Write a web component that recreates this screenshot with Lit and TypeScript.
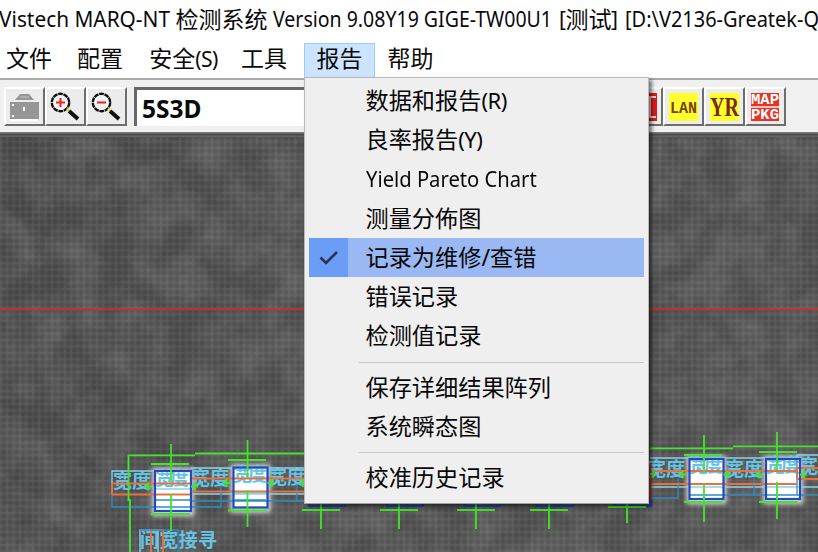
import { LitElement, html, svg, css } from "lit";
import { customElement, property } from "lit/decorators.js";

const FONT = css`"Noto Sans", "Noto Sans CJK SC", sans-serif`;

type Entry = { label?: string; latin?: boolean; checked?: boolean };
const ENTRIES: Entry[] = [
  { label: "数据和报告(R)" },
  { label: "良率报告(Y)" },
  { label: "Yield Pareto Chart", latin: true },
  { label: "测量分佈图" },
  { label: "记录为维修/查错", checked: true },
  { label: "错误记录" },
  { label: "检测值记录" },
  {},
  { label: "保存详细结果阵列" },
  { label: "系统瞬态图" },
  {},
  { label: "校准历史记录" },
];

@customElement("report-menu")
export class ReportMenu extends LitElement {
  static styles = css`
    :host { display: block; box-sizing: border-box; width: 345px; height: 427px; padding: 3px 4px;
      background: #efefef; border: 1px solid #b9b9b9; border-bottom-color: #a0a0a0;
      box-shadow: 3px 3px 4px rgba(0,0,0,.55); font: 23.2px/39px ${FONT}; color: #080808; }
    .item { display: flex; height: 39.3px; align-items: center; }
    .gutter { width: 39px; height: 100%; margin-right: 17.5px; display: grid; place-items: center; flex: none; }
    .label { white-space: pre; line-height: 36px; height: 38px; }
    .latin { font-size: 21.4px; transform: scaleX(.944); transform-origin: 0 50%; line-height: 38px; }
    .on { background: #99b8f4; }
    .on .gutter { background: #6b9df7; }
    .sep { height: 12px; margin-left: 50px; display: flex; align-items: center; }
    .sep::after { content: ""; height: 1px; width: 100%; background: #c8c8c8; }
    .p { font-size: 22px; letter-spacing: -.5px; }
  `;
  render() {
    return ENTRIES.map((e) => {
      if (!e.label) return html`<div class="sep"></div>`;
      const parts = e.label.split(/(\([A-Z]\))/);
      return html`<div class="item ${e.checked ? "on" : ""}">
        <span class="gutter">${e.checked
          ? html`<svg width="20" height="16" viewBox="0 0 20 16"><path d="M1.5 7.5 7 13 18 2" fill="none" stroke="#26364f" stroke-width="2.6"/></svg>`
          : ""}</span>
        <span class="label ${e.latin ? "latin" : ""}">${parts[0]}${parts[1] ? html`<span class="p">${parts[1]}</span>` : ""}</span>
      </div>`;
    });
  }
}

@customElement("tool-button")
export class ToolButton extends LitElement {
  @property() icon = "";
  static styles = css`
    :host { display: block; box-sizing: border-box; width: 41px; height: 39px; background: #ececec;
      border: 2px solid #fff; border-right: 2px solid #6e6e6e; border-bottom: 2px solid #6e6e6e; }
    svg { display: block; }
    .lan { font: bold 17px "Liberation Mono", monospace; }
    .yr { font: bold 27px "Liberation Serif", serif; }
    .pkg { font: bold 14px "Liberation Mono", monospace; }
  `;
  private glyph() {
    switch (this.icon) {
      case "case":
        return svg`<path d="M9 11 14 5H23L28 11" fill="#969696"/><path d="M14 8H23" stroke="#c4c4c4"/>
          <path d="M4 13H33V30H4Z" fill="#969696"/><path d="M12 12H28" stroke="#eee"/>
          <path d="M17 18h2v4h-2ZM6 15h2v2h-2ZM6 26h2v2h-2Z" fill="#fff"/><path d="M3 31H32" stroke="#fff" stroke-width="2"/>`;
      case "in":
      case "out":
        return svg`<circle cx="13.5" cy="13.5" r="8.7" fill="#f4f4f4" stroke="#111" stroke-width="2.4" stroke-dasharray="4.8 .67"/>
          <path d="M9 13.5H18" stroke="#ee2020" stroke-width="2"/>
          ${this.icon === "in" ? svg`<path d="M13.5 9V18" stroke="#ee2020" stroke-width="2"/>` : ""}
          <path d="M20 21.5 22 20" stroke="#e6dd22" stroke-width="3"/><path d="M22 22 31 30" stroke="#111" stroke-width="4"/>`;
      case "red":
        return svg`<rect x="4" y="4" width="29" height="28" fill="#dd1c1c"/><path d="M32 8H26V28H32" stroke="#f3dada" stroke-width="2" fill="none"/>`;
      case "lan":
        return svg`<rect x="4" y="4" width="29" height="28" fill="#ffff2c"/><text class="lan" x="5" y="24" fill="#7a3f08" textLength="27" lengthAdjust="spacingAndGlyphs">LAN</text>`;
      case "yr":
        return svg`<rect x="4" y="4" width="29" height="28" fill="#ffff2c"/><text class="yr" x="4" y="27" fill="#7a2808" textLength="29" lengthAdjust="spacingAndGlyphs">YR</text>`;
      default:
        return svg`<rect x="4" y="4" width="28" height="28" fill="#e63427"/><path d="M4 18H32" stroke="#fff" stroke-width="1.4"/>
          <text class="pkg" x="4" y="15" fill="#fff" textLength="28" lengthAdjust="spacingAndGlyphs">MAP</text>
          <text class="pkg" x="4" y="30" fill="#fff" textLength="28" lengthAdjust="spacingAndGlyphs">PKG</text>`;
    }
  }
  render() {
    return html`<svg width="37" height="35" viewBox="0 0 37 35">${this.glyph()}</svg>`;
  }
}

type Pad = { x: number; w: number; y: number; cx: number; top: number; hx: number };
const PADS: Pad[] = [
  { x: 155, w: 36, y: 471, cx: 171, top: 444, hx: 151 },
  { x: 233.5, w: 34, y: 467.5, cx: 247.5, top: 440, hx: 228 },
  { x: 689.5, w: 34, y: 459, cx: 704, top: 435, hx: 684 },
  { x: 766, w: 34, y: 459, cx: 777, top: 432, hx: 759 },
];
const LOWER = [[321, 510], [399, 510], [476, 510], [549, 510], [627, 507]];

@customElement("inspection-view")
export class InspectionView extends LitElement {
  static styles = css`
    :host, svg { display: block; }
    .tag { font: bold 19px "Noto Sans CJK SC", sans-serif; fill: #65c4e4; }
    .g { stroke: #42e52b; stroke-width: 1.8; fill: none; }
    .o { stroke: #e8703c; stroke-width: 1.8; fill: none; }
    .b { stroke: #2b8fc4; stroke-width: 1.3; fill: none; }
    .c { stroke: #86d4ea; stroke-width: 1.4; fill: none; }
    .n { stroke: #2448bd; stroke-width: 2.2; fill: none; }
  `;
  render() {
    return html`<svg width="818" height="415" viewBox="0 137 818 415">
      <defs>
        <pattern id="weave" width="6.4" height="6.4" patternUnits="userSpaceOnUse">
          <path d="M0 .8H6.4M.8 0V6.4" stroke="#fff" stroke-width="1.6" stroke-opacity=".05"/><path d="M0 4H6.4M4 0V6.4" stroke="#000" stroke-width="1.6" stroke-opacity=".07"/>
        </pattern>
        <filter id="grain" x="0" y="0" width="100%" height="100%" color-interpolation-filters="sRGB">
          <feTurbulence type="fractalNoise" baseFrequency=".03" numOctaves="4" seed="4"/>
          <feColorMatrix values="0 0 0 0 .62  0 0 0 0 .62  0 0 0 0 .62  .55 0 0 0 -.17"/>
        </filter>
        <filter id="glow"><feGaussianBlur stdDeviation="2.5"/></filter>
        <linearGradient id="base"><stop offset="0" stop-color="#4a4a4a"/><stop offset=".4" stop-color="#505050"/><stop offset="1" stop-color="#505050"/></linearGradient>
      </defs>
      <rect y="137" width="818" height="415" fill="url(#base)"/>
      <rect y="137" width="818" height="415" filter="url(#grain)"/>
      <rect y="137" width="818" height="415" fill="url(#weave)"/>
      <path d="M0 309.3H818" stroke="#d8281f" stroke-width="1.8"/>

      ${PADS.map((p) => svg`<rect x=${p.x - 3} y=${p.y - 3} width=${p.w + 6} height="48" fill="#fff" filter="url(#glow)" opacity=".8"/>
        <rect x=${p.x} y=${p.y} width=${p.w} height="39" fill="#fff"/>`)}
      <path d="M302 504H340" stroke="#ddd" stroke-width="12" filter="url(#glow)"/>

      <text class="tag" x="113" y="488">宽度</text>
      <text class="tag" x="155" y="485" textLength="34">宽度</text>
      <text class="tag" x="191" y="485">宽度</text>
      <text class="tag" x="233" y="481" textLength="34">宽度</text>
      <text class="tag" x="268" y="484">宽度</text>
      <text class="tag" x="647" y="476">宽度</text>
      <text class="tag" x="689" y="472" textLength="34">宽度</text>
      <text class="tag" x="725" y="476">宽度</text>
      <text class="tag" x="766" y="472" textLength="34">宽度</text>
      <text class="tag" x="799" y="473">宽</text>
      <text class="tag" x="140" y="547" textLength="77">间宽接寻</text>

      <path class="c" d="M112 494V471H155M191 468H305M191 494H305M156 489H190M235 493H266M650 458H797V455H818M650 487H818"/>
      <path class="b" d="M112 494V507H221V486M191 501H305M297 501V484M156 500H190M235 500H266M650 498H678V478M690 495H818M754 495V477M797 495V458"/>
      <path class="o" d="M112 483.5H191M112 494.5H191M112 483V495M191 478.5H305M191 491.5H305M650 471H797M650 484H797M797 468H818M797 479H818M797 467V479"/>
      <path class="c" d="M140 552V530H150M158 552V530"/><path class="o" d="M151 552V530H163V552"/><path class="b" d="M140 530H178V552"/>
      <path d="M650.5 463V503" stroke="#a83434" stroke-width="2"/>
      ${PADS.map((p) => svg`<rect class="n" x=${p.x} y=${p.y} width=${p.w} height="40"/>
        <path class="g" d="M${p.cx} ${p.top}v38M${p.cx} ${p.top + 50}v37M${p.hx} ${p.top + 20}h38M${p.hx} ${p.y + 43}h39"/>
        <path class="g" stroke-width="2.4" d="M${p.x - 11} ${p.y + 15.5}h8m-4-4v8M${p.x + p.w} ${p.y + 15.5}h7m-3-4v8"/>`)}
      <path class="g" d="M130 552V500H128.5V455.3H195M195 453.5H305M650 448.3H733M733 446.3H818M300 483h5m-2-4v8M650 474h6m-3-4v8"/>
      ${LOWER.map(([x, y]) => svg`<path class="n" d="M${x - 12} 500V506H${x + 24}V500"/><path class="g" d="M${x - 19} ${y}h38M${x} 502V${y === 507 ? 523 : 529}"/>`)}
    </svg>`;
  }
}

@customElement("app-root")
export class AppRoot extends LitElement {
  static styles = css`
    :host { display: flex; flex-direction: column; position: relative; width: 818px; height: 552px;
      overflow: hidden; background: #fff; color: #0a0a0a; font-family: ${FONT}; }
    .title { height: 38px; flex: none; }
    .title svg { display: block; }
    .bar { height: 40px; flex: none; display: flex; align-items: stretch; font-size: 23px; box-sizing: border-box; padding-top: 5px; }
    .entry { box-sizing: border-box; width: 71px; height: 35px; border: 1px solid transparent; line-height: 28px; text-align: center; white-space: pre; }
    .file { width: 58px; }
    .config { width: 84px; }
    .safety { width: 83px; }
    .utility { width: 79px; padding-right: 1px; }
    .open { background: #cce4ff; border-color: #9acbfa; }
    .s { font-size: 21px; letter-spacing: -.5px; }
    .tools { flex: none; box-sizing: border-box; height: 54px; border-top: 2px solid #a9a9a9; background: #f0f0f0;
      display: flex; padding: 7px 0 0 4px; }
    .field { box-sizing: border-box; width: 300px; height: 39px; margin-left: 7px; padding-left: 5px; background: #fff;
      border-top: 3px solid #686868; border-left: 3px solid #686868; font: bold 24.5px/37px "Noto Sans", sans-serif; }
    .right { display: flex; margin-left: 188px; }
    .edge { flex: none; height: 5px; background: linear-gradient(#8a8a8a, #4e4e4e 50%, #686868); }
    .drop { position: absolute; left: 304px; top: 77px; }
    text { font: 21.2px ${FONT}; fill: #0a0a0a; }
    .han { font-size: 23px; }
  `;
  render() {
    return html`
      <div class="title"><svg width="818" height="38">
        <text x="-1" y="27" textLength="171" lengthAdjust="spacingAndGlyphs">Vistech MARQ-NT</text>
        <text class="han" x="175.5" y="27.5">检测系统</text>
        <text x="273" y="27" textLength="279" lengthAdjust="spacingAndGlyphs">Version 9.08Y19 GIGE-TW00U1</text>
        <text x="559" y="27">[</text><text class="han" x="565.5" y="27.5">测试</text><text x="611" y="27">]</text>
        <text x="625" y="27" textLength="194" lengthAdjust="spacingAndGlyphs">[D:\\V2136-Greatek-Q</text>
      </svg></div>
      <div class="bar">
        <div class="entry file">文件</div><div class="entry config">配置</div>
        <div class="entry safety">安全<span class="s">(S)</span></div>
        <div class="entry utility">工具</div>
        <div class="entry open">报告</div><div class="entry">帮助</div>
      </div>
      <div class="tools">
        <tool-button icon="case"></tool-button><tool-button icon="in"></tool-button><tool-button icon="out"></tool-button>
        <div class="field">5S3D</div>
        <div class="right"><tool-button icon="red"></tool-button><tool-button icon="lan"></tool-button><tool-button icon="yr"></tool-button><tool-button icon="map"></tool-button></div>
      </div>
      <div class="edge"></div>
      <inspection-view></inspection-view>
      <report-menu class="drop"></report-menu>`;
  }
}
